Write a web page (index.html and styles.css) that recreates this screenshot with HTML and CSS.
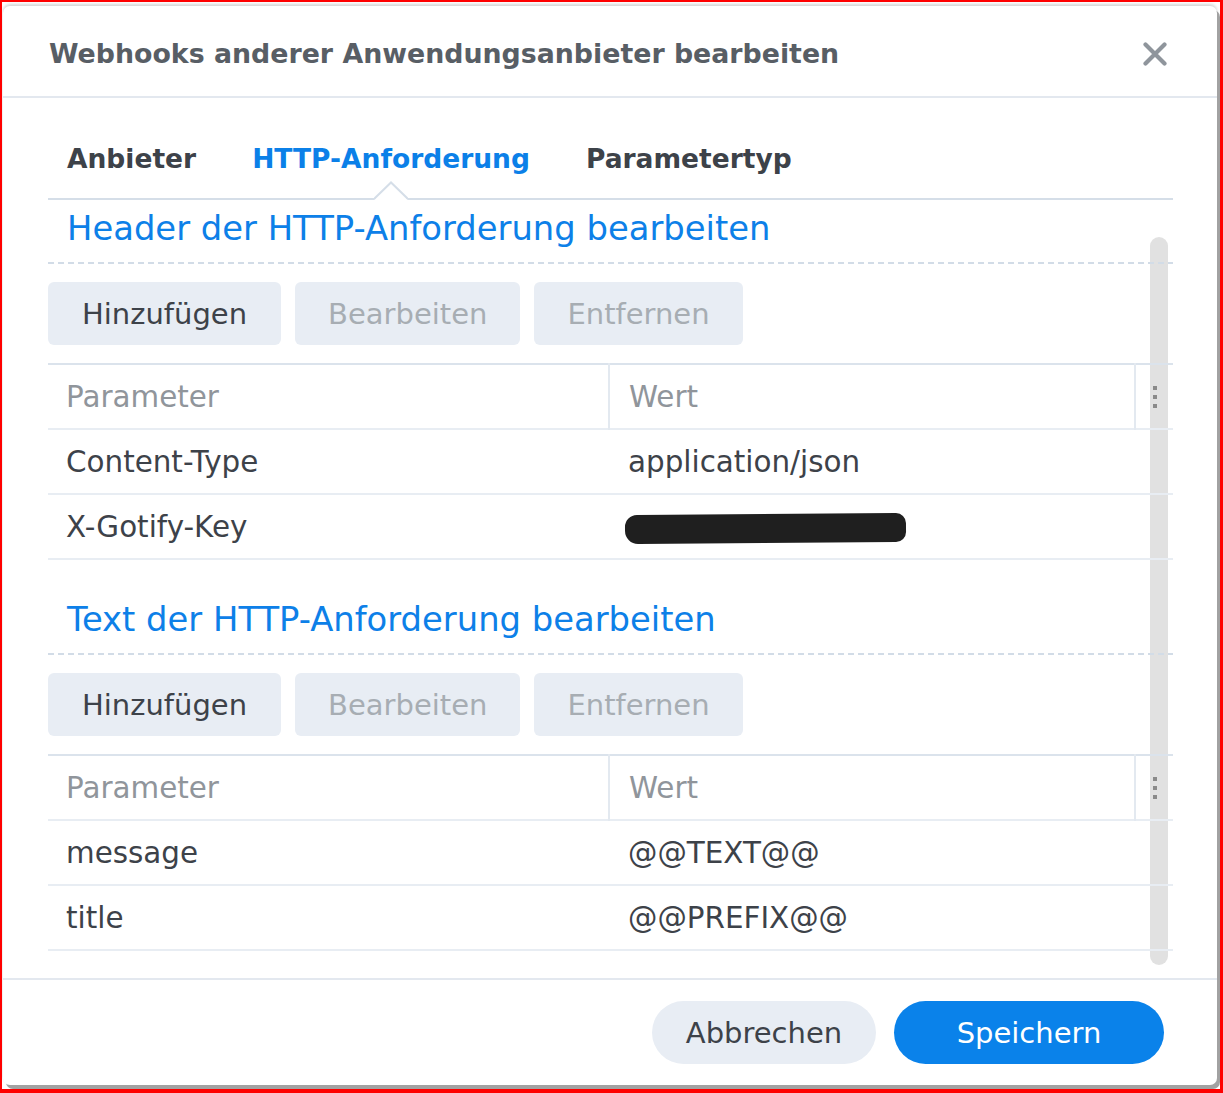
FILE: index.html
```html
<!DOCTYPE html>
<html lang="de">
<head>
<meta charset="utf-8">
<title>Webhooks anderer Anwendungsanbieter bearbeiten</title>
<link rel="stylesheet" href="styles.css">
</head>
<body>
<div class="frame">
  <div class="dialog">
    <div class="dlg-head">
      <h1 class="dlg-title">Webhooks anderer Anwendungsanbieter bearbeiten</h1>
      <svg class="close" width="24" height="24" viewBox="0 0 24 24"><path d="M2.5 2.5 L21.5 21.5 M21.5 2.5 L2.5 21.5" stroke="#8f959c" stroke-width="4.2" stroke-linecap="round"/></svg>
    </div>
    <div class="dlg-body">
      <div class="tabs">
        <span class="tab">Anbieter</span>
        <span class="tab active">HTTP-Anforderung<svg class="caret" width="34" height="19" viewBox="0 0 34 19"><polygon points="0,19 17,2 34,19" fill="#fff"/><polyline points="0,18 17,1.5 34,18" fill="none" stroke="#d5dee8" stroke-width="2"/></svg></span>
        <span class="tab">Parametertyp</span>
      </div>
      <div class="scroll">
        <div class="scrollbar"></div>
        <div class="content">
          <h2 class="section-title">Header der HTTP-Anforderung bearbeiten</h2>
          <div class="toolbar">
            <button class="btn">Hinzufügen</button>
            <button class="btn disabled">Bearbeiten</button>
            <button class="btn disabled">Entfernen</button>
          </div>
          <table class="grid">
            <colgroup><col class="c1"><col class="c2"><col class="c3"></colgroup>
            <thead>
              <tr><th>Parameter</th><th>Wert</th><th class="menu"><span class="dots"><i></i><i></i><i></i></span></th></tr>
            </thead>
            <tbody>
              <tr><td>Content-Type</td><td>application/json</td><td></td></tr>
              <tr><td>X-Gotify-Key</td><td><span class="redact"></span></td><td></td></tr>
            </tbody>
          </table>

          <h2 class="section-title second">Text der HTTP-Anforderung bearbeiten</h2>
          <div class="toolbar">
            <button class="btn">Hinzufügen</button>
            <button class="btn disabled">Bearbeiten</button>
            <button class="btn disabled">Entfernen</button>
          </div>
          <table class="grid">
            <colgroup><col class="c1"><col class="c2"><col class="c3"></colgroup>
            <thead>
              <tr><th>Parameter</th><th>Wert</th><th class="menu"><span class="dots"><i></i><i></i><i></i></span></th></tr>
            </thead>
            <tbody>
              <tr><td>message</td><td>@@TEXT@@</td><td></td></tr>
              <tr><td>title</td><td>@@PREFIX@@</td><td></td></tr>
            </tbody>
          </table>
        </div>
      </div>
    </div>
    <div class="dlg-foot">
      <button class="pill cancel">Abbrechen</button>
      <button class="pill save">Speichern</button>
    </div>
  </div>
</div>
</body>
</html>
```

FILE: styles.css
```css
html, body {
  margin: 0;
  padding: 0;
  background: #fff;
}
body {
  font-family: "DejaVu Sans", Verdana, sans-serif;
}
.frame {
  width: 1223px;
  height: 1093px;
  box-sizing: border-box;
  border: solid #ff0000;
  border-width: 2px 3px 4px 2px;
  background: #fff;
  padding: 4px 0 0 1px;
  overflow: hidden;
}
.dialog {
  width: 1214px;
  height: 1079px;
  background: #fff;
  border-radius: 7px;
  box-shadow: 3px 4px 0 #a2a2a2, 0 -2px 3px #d6d6d6;
  display: flex;
  flex-direction: column;
}
.dlg-head {
  height: 86px;
  border-bottom: 2px solid #e3e8ef;
  display: flex;
  align-items: center;
  justify-content: space-between;
  padding: 4px 50px 0 46px;
  flex: none;
}
.dlg-title {
  margin: 0;
  font-size: 26.8px;
  font-weight: bold;
  color: #585e65;
  letter-spacing: 0;
}
.close { display: block; margin-top: 1px; }
.dlg-body {
  flex: 1;
  padding: 0 44px 0 45px;
  display: flex;
  flex-direction: column;
  min-height: 0;
}
.tabs {
  display: flex;
  gap: 56px;
  padding-left: 19px;
  border-bottom: 2px solid #d5dee8;
  height: 102px;
  box-sizing: border-box;
  align-items: flex-end;
  flex: none;
}
.tab {
  position: relative;
  font-size: 26.5px;
  font-weight: bold;
  line-height: 40px;
  padding-bottom: 19px;
  color: #3d4249;
  white-space: nowrap;
}
.tab.active { color: #0b80e8; }
.caret {
  position: absolute;
  left: 50%;
  margin-left: -17px;
  bottom: -2px;
  display: block;
}
.scroll {
  position: relative;
  flex: 1;
}
.scrollbar {
  position: absolute;
  top: 37px;
  right: 5px;
  width: 18px;
  height: 728px;
  border-radius: 9px;
  background: #e1e1e1;
  z-index: 0;
}
.content {
  position: relative;
  z-index: 1;
}
.section-title {
  margin: 9px 0 0;
  padding: 0 0 15px 19px;
  font-size: 33.8px;
  font-weight: normal;
  line-height: 40px;
  color: #0d80e8;
  white-space: nowrap;
  background: repeating-linear-gradient(to right, #d2dce7 0 6px, transparent 6px 10px) left bottom / 100% 2px no-repeat;
}
.section-title.second { margin-top: 40px; }
.toolbar {
  display: flex;
  gap: 14px;
  margin-top: 18px;
}
.btn {
  font-family: inherit;
  font-size: 29px;
  height: 63px;
  padding: 0 34px;
  border: none;
  border-radius: 6px;
  background: #e8edf4;
  color: #3d4249;
}
.btn.disabled { color: #a7adb3; padding: 0 33px; }
.grid {
  width: 100%;
  margin-top: 18px;
  border-collapse: collapse;
  table-layout: fixed;
  font-size: 29.4px;
}
.grid col.c1 { width: 561px; }
.grid col.c3 { width: 38px; }
.grid thead tr { border-top: 2px solid #dbe3ec; }
.grid tr { border-bottom: 2px solid #e8edf3; }
.grid th, .grid td {
  height: 63px;
  padding: 0 0 0 18px;
  text-align: left;
  font-weight: normal;
  color: #3d4249;
  white-space: nowrap;
  vertical-align: middle;
}
.grid td:nth-child(2), .grid th:nth-child(2) { padding-left: 19px; }
.grid th { color: #90959b; }
.grid th + th { border-left: 2px solid #e3e9f0; }
.grid th.menu { padding: 0; text-align: center; }
.dots {
  display: inline-flex;
  flex-direction: column;
  gap: 5px;
  vertical-align: middle;
  margin-top: -2px;
}
.dots i {
  display: block;
  width: 4px;
  height: 4px;
  background: #8a8a8a;
}
.redact {
  display: inline-block;
  width: 281px;
  height: 29px;
  margin-left: -3px;
  background: #1f1f1f;
  border-radius: 12px 10px 10px 13px;
  vertical-align: middle;
  transform: rotate(-0.4deg);
}
.dlg-foot {
  flex: none;
  height: 105px;
  border-top: 2px solid #e3e8ef;
  display: flex;
  justify-content: flex-end;
  align-items: center;
  gap: 18px;
  padding-right: 53px;
}
.pill {
  font-family: inherit;
  font-size: 29px;
  height: 63px;
  border: none;
  border-radius: 32px;
}
.pill.cancel { width: 224px; background: #e8edf4; color: #3d4249; }
.pill.save { width: 270px; background: #0a82ea; color: #fff; }
```
